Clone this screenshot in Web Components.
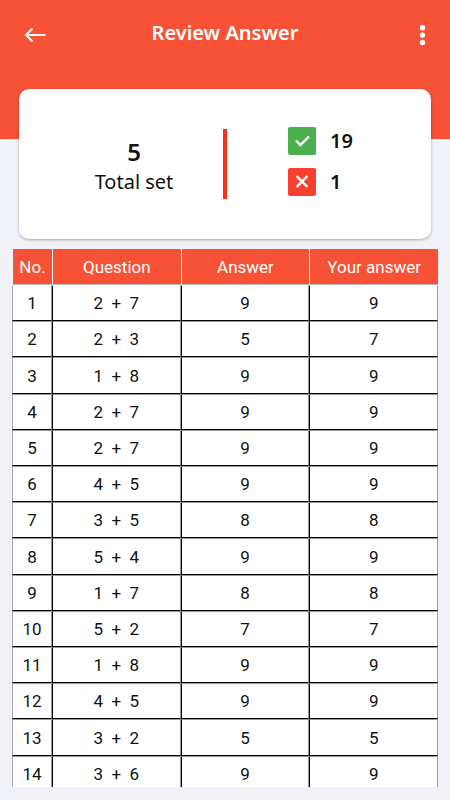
<!DOCTYPE html>
<html lang="en">
<head>
<meta charset="utf-8">
<meta name="viewport" content="width=device-width, initial-scale=1">
<title>Review Answer</title>
<style>
  :root { --brand: #f75235; --ink: #111; --page: #f0f2f8; }
  body { margin: 0; background: var(--page); color: var(--ink); font-family: "Noto Sans", "Open Sans", sans-serif; }
</style>
</head>
<body>
<review-screen>
  <app-bar slot="bar">Review Answer</app-bar>
  <score-card slot="summary">
    <set-total slot="total" count="5">Total set</set-total>
    <score-line kind="right" label="Correct">19</score-line>
    <score-line kind="wrong" label="Wrong">1</score-line>
  </score-card>
  <answer-table></answer-table>
</review-screen>
<script>
  class Base extends HTMLElement {
    constructor() {
      super();
      this.attachShadow({ mode: "open" });
    }
    connectedCallback() {
      this.shadowRoot.innerHTML = this.render();
    }
  }

  customElements.define("review-screen", class extends Base {
    render() {
      return `<style>
        :host { display: flex; flex-direction: column; height: 100vh; box-sizing: border-box; padding-bottom: 13px; }
        header { background: var(--brand); padding-bottom: 70px; flex: none; }
        section { margin: -50px 19px 0; flex: none; }
        main { margin: 10px 12px 0; flex: 1; min-height: 0; overflow-y: auto; scrollbar-width: none; }
      </style>
      <header><slot name="bar"></slot></header>
      <section><slot name="summary"></slot></section>
      <main><slot></slot></main>`;
    }
  });

  customElements.define("app-bar", class extends Base {
    render() {
      return `<style>
        :host { display: flex; align-items: center; justify-content: space-between; height: 69px; padding: 0 16px; color: #fff; }
        h1 { margin: 0 0 4px; font-size: 20px; line-height: 28px; font-weight: 600; }
        button { display: flex; justify-content: flex-end; width: 40px; height: 40px; padding: 0; border: 0; background: none; color: inherit; }
        svg { display: block; }
      </style>
      <button type="button" aria-label="Back"><svg width="40" height="40" viewBox="0 0 40 40" fill="none" stroke="currentColor" stroke-width="2"><path d="M29.5 20H10.5M16.5 13.5L10 20L16.5 26.5"/></svg></button>
      <h1><slot></slot></h1>
      <button type="button" aria-label="More options"><svg width="24" height="40" viewBox="0 0 24 40" fill="currentColor"><circle cx="12.5" cy="12.8" r="2.7"/><circle cx="12.5" cy="20.1" r="2.7"/><circle cx="12.5" cy="27.5" r="2.7"/></svg></button>`;
    }
  });

  customElements.define("score-card", class extends Base {
    render() {
      return `<style>
        :host { display: grid; grid-template-columns: 1fr 4px 1fr; align-items: center; height: 150px; border-radius: 10px; background: #fff; box-shadow: 0 1px 3px rgba(0, 0, 0, .3); }
        .rule { height: 70px; background: #f92f16; }
        .total { padding: 6px 0 0 26px; }
        .scores { display: flex; flex-direction: column; gap: 13px; padding: 0 0 6px 61px; }
      </style>
      <div class="total"><slot name="total"></slot></div>
      <div class="rule"></div>
      <div class="scores"><slot></slot></div>`;
    }
  });

  customElements.define("set-total", class extends Base {
    render() {
      return `<style>
        :host { display: block; text-align: center; font-size: 20px; line-height: 30px; }
        strong { display: block; font-size: 24px; font-weight: 600; }
      </style>
      <strong>${this.getAttribute("count")}</strong><slot></slot>`;
    }
  });

  customElements.define("score-line", class extends Base {
    render() {
      const right = this.getAttribute("kind") === "right";
      const mark = right ? "M8 13.5L12.3 18L21 9.5" : "M8.7 8.2L19.3 18.8M19.3 8.2L8.7 18.8";
      return `<style>
        :host { display: flex; align-items: center; gap: 14px; font-size: 20px; line-height: 28px; font-weight: 600; }
        svg { display: block; }
      </style>
      <svg role="img" aria-label="${this.getAttribute("label")}" width="28" height="28" viewBox="0 0 28 28"><rect width="28" height="28" rx="2" fill="${right ? "#4caf50" : "#f9402f"}"/><path d="${mark}" fill="none" stroke="#fff" stroke-width="2.4"/></svg>
      <span><slot></slot></span>`;
    }
  });

  const rows = [
    [2, 7, 9, 9], [2, 3, 5, 7], [1, 8, 9, 9], [2, 7, 9, 9], [2, 7, 9, 9],
    [4, 5, 9, 9], [3, 5, 8, 8], [5, 4, 9, 9], [1, 7, 8, 8], [5, 2, 7, 7],
    [1, 8, 9, 9], [4, 5, 9, 9], [3, 2, 5, 5], [3, 6, 9, 9]
  ];

  customElements.define("answer-table", class extends Base {
    render() {
      return `<style>
        :host { display: block; font-family: Roboto, sans-serif; font-size: 17px; line-height: 24px; }
        table { width: 100%; height: 543px; table-layout: fixed; border-spacing: 0; }
        .no { width: 40px; }
        th, td { box-sizing: border-box; padding: 0; text-align: center; font-weight: 400; white-space: pre; }
        th { height: 36px; background: var(--brand); color: #fff; border-left: 1px solid #fff; border-bottom: 1px solid #bbb; }
        th:first-child { border-left-color: var(--page); }
        td { background: #fff; border: 1px solid #999; border-left-color: #000; border-bottom-color: #000; }
        td:first-child { border-left-color: #aaa; }
        tbody tr:first-child td { border-top-color: #fff; }
      </style>
      <table>
        <thead><tr><th class="no" scope="col">No.</th><th scope="col">Question</th><th scope="col">Answer</th><th scope="col">Your answer</th></tr></thead>
        <tbody>${rows.map(([a, b, answer, given], i) =>
          `<tr><td>${i + 1}</td><td>${a}  +  ${b}</td><td>${answer}</td><td>${given}</td></tr>`).join("")}</tbody>
      </table>`;
    }
  });
</script>
</body>
</html>
